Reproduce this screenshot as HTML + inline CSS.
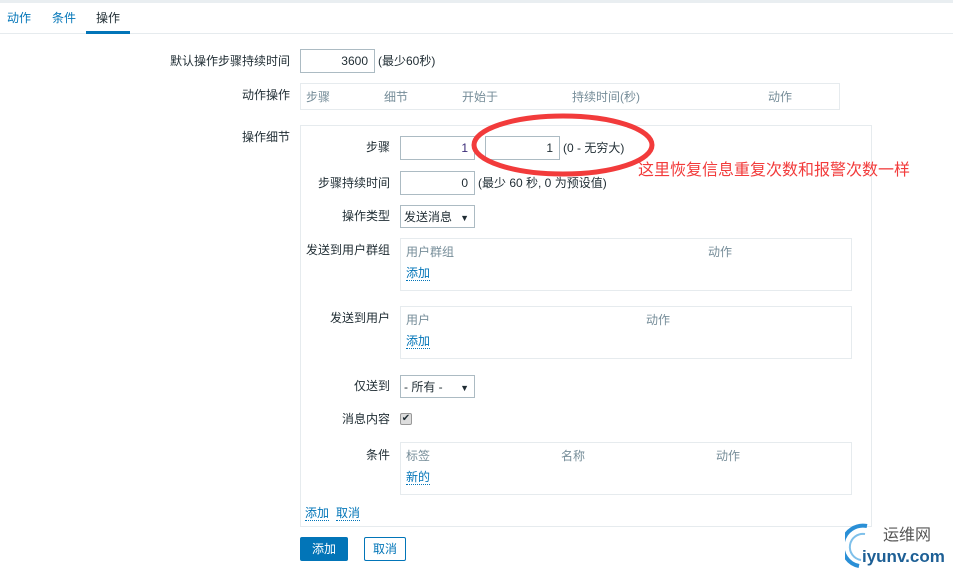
<!DOCTYPE html>
<html><head><meta charset="utf-8"><style>
*{margin:0;padding:0;box-sizing:border-box}
body{width:953px;height:572px;background:#fff;position:relative;overflow:hidden;font-family:"Liberation Sans","Noto Sans CJK SC",sans-serif;font-size:12px;color:#1f2c33}
.a{position:absolute;white-space:nowrap;line-height:14px}
.r{text-align:right}
.in{position:absolute;border:1px solid #acbbc3;background:#fff;height:24px;text-align:right;padding:4px 6px;line-height:14px}
.box{position:absolute;border:1px solid #e6ebee;background:#fff}
.g{color:#768d99}
.lk{color:#0275b8;border-bottom:1px dotted #0275b8;line-height:13px}
.sel{position:absolute;border:1px solid #acbbc3;height:23px;padding:4px 3px;line-height:14px;width:75px}
.sel:after{content:"▼";position:absolute;right:5px;top:5px;font-size:9px}
</style></head><body>
<div style="position:absolute;left:0;top:0;width:953px;height:3px;background:#e9eef1"></div>
<div style="position:absolute;left:0;top:33px;width:953px;height:1px;background:#e6ebee"></div>
<div class="a" style="left:7px;top:11px;color:#0275b8">动作</div>
<div class="a" style="left:52px;top:11px;color:#0275b8">条件</div>
<div class="a" style="left:96px;top:11px">操作</div>
<div style="position:absolute;left:86px;top:31px;width:44px;height:3px;background:#0275b8"></div>

<div class="a r" style="right:663px;top:54px">默认操作步骤持续时间</div>
<div class="in" style="left:300px;top:49px;width:75px">3600</div>
<div class="a" style="left:378px;top:54px">(最少60秒)</div>

<div class="a r" style="right:663px;top:88px">动作操作</div>
<div class="box" style="left:300px;top:83px;width:540px;height:27px"></div>
<div class="a g" style="left:306px;top:90px">步骤</div>
<div class="a g" style="left:384px;top:90px">细节</div>
<div class="a g" style="left:462px;top:90px">开始于</div>
<div class="a g" style="left:572px;top:90px">持续时间(秒)</div>
<div class="a g" style="left:768px;top:90px">动作</div>

<div class="a r" style="right:663px;top:130px">操作细节</div>
<div class="box" style="left:300px;top:125px;width:572px;height:402px"></div>

<div class="a r" style="right:563px;top:140px">步骤</div>
<div class="in" style="left:400px;top:136px;width:75px;color:#3a2b78">1</div>
<div class="in" style="left:485px;top:136px;width:75px">1</div>
<div class="a" style="left:563px;top:141px">(0 - 无穷大)</div>
<svg style="position:absolute;left:0;top:0" width="953" height="572"><ellipse cx="563" cy="145" rx="89" ry="29" fill="none" stroke="#f23b3b" stroke-width="5"/></svg>
<div class="a" style="left:638px;top:162px;color:#f23b3b;font-size:16px;line-height:18px">这里恢复信息重复次数和报警次数一样</div>

<div class="a r" style="right:563px;top:176px">步骤持续时间</div>
<div class="in" style="left:400px;top:171px;width:75px">0</div>
<div class="a" style="left:478px;top:176px">(最少 60 秒, 0 为预设值)</div>

<div class="a r" style="right:563px;top:209px">操作类型</div>
<div class="sel" style="left:400px;top:205px">发送消息</div>

<div class="a r" style="right:563px;top:243px">发送到用户群组</div>
<div class="box" style="left:400px;top:238px;width:452px;height:53px"></div>
<div class="a g" style="left:406px;top:245px">用户群组</div>
<div class="a g" style="left:708px;top:245px">动作</div>
<div class="a lk" style="left:406px;top:267px">添加</div>

<div class="a r" style="right:563px;top:311px">发送到用户</div>
<div class="box" style="left:400px;top:306px;width:452px;height:53px"></div>
<div class="a g" style="left:406px;top:313px">用户</div>
<div class="a g" style="left:646px;top:313px">动作</div>
<div class="a lk" style="left:406px;top:335px">添加</div>

<div class="a r" style="right:563px;top:379px">仅送到</div>
<div class="sel" style="left:400px;top:375px">- 所有 -</div>

<div class="a r" style="right:563px;top:412px">消息内容</div>
<div style="position:absolute;left:400px;top:413px;width:12px;height:12px;border:1px solid #999;background:#ddd;border-radius:2px;font-size:10px;line-height:10px;text-align:center">✔</div>

<div class="a r" style="right:563px;top:448px">条件</div>
<div class="box" style="left:400px;top:442px;width:452px;height:53px"></div>
<div class="a g" style="left:406px;top:449px">标签</div>
<div class="a g" style="left:561px;top:449px">名称</div>
<div class="a g" style="left:716px;top:449px">动作</div>
<div class="a lk" style="left:406px;top:471px">新的</div>

<div class="a lk" style="left:305px;top:507px">添加</div>
<div class="a lk" style="left:336px;top:507px">取消</div>

<div style="position:absolute;left:300px;top:537px;width:48px;height:24px;background:#0275b8;color:#fff;text-align:center;line-height:24px;border-radius:2px">添加</div>
<div style="position:absolute;left:364px;top:537px;width:42px;height:24px;border:1px solid #0275b8;color:#0275b8;text-align:center;line-height:22px;border-radius:2px">取消</div>

<svg style="position:absolute;left:845px;top:520px" width="108" height="52"><path d="M22 6 A20 20 0 1 0 14 46" fill="none" stroke="#2a8fd6" stroke-width="4"/><path d="M20 14 A13 13 0 1 0 16 40" fill="none" stroke="#7ec0ea" stroke-width="2"/></svg>
<div class="a" style="left:883px;top:527px;font-size:16px;color:#555;line-height:18px">运维网</div>
<div class="a" style="left:862px;top:547px;font-size:17px;font-weight:bold;color:#1d5f95;line-height:20px">iyunv.com</div>
</body></html>
